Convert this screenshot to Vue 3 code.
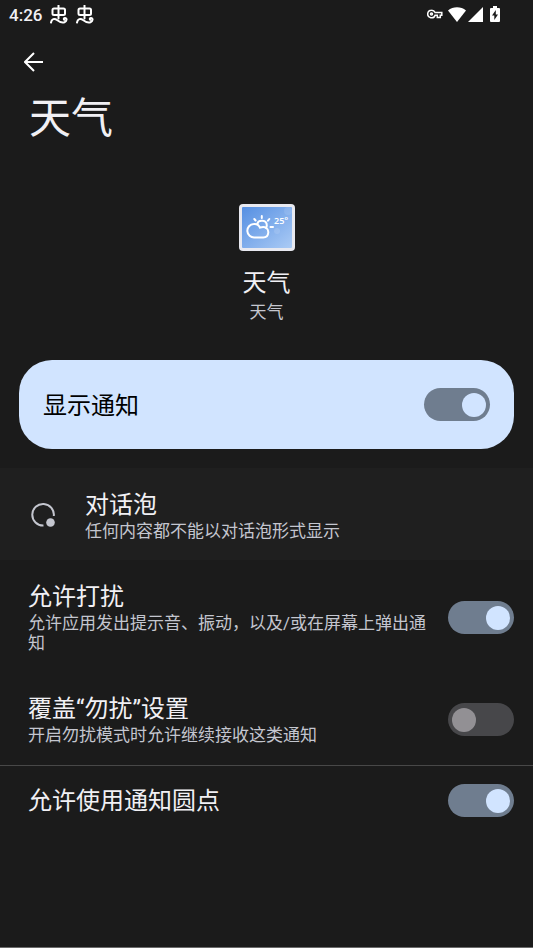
<script setup>
import { ref } from 'vue'

const showNotifications = ref(true)
const allowInterrupt = ref(true)
const overrideDnd = ref(false)
const allowDot = ref(true)
</script>

<template>
  <div class="screen">
    <div class="status-bar">
      <div class="status-left">
        <span class="clock">4:26</span>
        <svg v-for="n in 2" :key="n" class="bug" viewBox="0 0 18 20" aria-hidden="true">
          <path d="M8.500 0.500v13M4 3.500h9.500q1.500 0 1.500 1.500v3.500q0 1.500-1.500 1.500H4q-1.500 0-1.500-1.500V5q0-1.500 1.500-1.500z" />
          <path d="M1 17.500c.5-3.500 3.500-4.500 6-2.500s4.500 3.200 7.500 2.200c2.500-1 2.800-4.200.5-4.200-1.200 0-1.500 1.200-.8 1.800" />
        </svg>
      </div>
      <div class="status-right">
        <svg class="key" viewBox="0 0 16 10" aria-hidden="true">
          <path d="M4.500 1.200a3.800 3.800 0 1 0 3.600 5h2.200v2.300h3v-2.300h1.500v-2.700H8.100a3.800 3.800 0 0 0-3.600-2.300z" />
          <circle cx="4.500" cy="5" r="1" />
        </svg>
        <svg class="wifi" viewBox="0 0 18 15" aria-hidden="true"><path d="M9 15L0 3.500C5-.8 13-.8 18 3.500z" /></svg>
        <svg class="signal" viewBox="0 0 15 15" aria-hidden="true"><path d="M15 0v15H0z" /></svg>
        <svg class="battery" viewBox="0 0 10 16" aria-hidden="true">
          <path d="M3 0h4v2h2q1 0 1 1v12q0 1-1 1H1q-1 0-1-1V3q0-1 1-1h2z" />
          <path class="bolt" d="M5.800 4L2 9.500h2.300V14L8 8.500H5.800z" />
        </svg>
      </div>
    </div>

    <header>
      <button class="back" type="button" aria-label="返回">
        <svg viewBox="0 0 20 20" aria-hidden="true"><path d="M19 10H2M10 1l-9 9 9 9" /></svg>
      </button>
      <h1>天气</h1>
    </header>

    <section class="app">
      <svg class="app-icon" viewBox="0 0 56 47" aria-hidden="true">
        <defs>
          <linearGradient id="sky" x1="0" y1="0" x2="1" y2="1">
            <stop offset="0" stop-color="#558fe2" />
            <stop offset="1" stop-color="#abcbf5" />
          </linearGradient>
        </defs>
        <rect width="56" height="47" rx="4" fill="#e8e9f0" />
        <rect x="3" y="3" width="50" height="41" rx="1" fill="url(#sky)" />
        <circle cx="49" cy="7" r="4" fill="#fff" opacity=".1" />
        <circle cx="38" cy="27" r="3" fill="#fff" opacity=".12" />
        <g class="weather">
          <path d="M15.500 33.500a6.500 6.500 0 0 1-.8-13.500c3-.4 5 .8 6.300 3.700 5-2.200 8.500.8 8.300 4.800-.2 3-2.300 5-5 5z" />
          <path d="M18.300 20c.8-4.500 9.700-4.500 9.500 1.500 0 1-.3 1.800-.8 2.500" />
          <path d="M22.800 12v2M15.300 15l1.300 1.500M30.300 15l-1.300 1.700M31.500 23h2.500" />
        </g>
        <text x="35" y="20" class="temp">25°</text>
      </svg>
      <h2>天气</h2>
      <p>天气</p>
    </section>

    <main>
      <label class="main-switch">
        <span class="title">显示通知</span>
        <input v-model="showNotifications" class="switch" type="checkbox" role="switch">
      </label>

      <button class="bubbles" type="button">
        <svg class="bubble-icon" viewBox="0 0 26 26" aria-hidden="true">
          <path d="M13.500 23.500A10.800 10.800 0 1 1 23.800 14" />
          <circle cx="20.500" cy="20.500" r="4.300" />
        </svg>
        <span class="copy">
          <span class="title">对话泡</span>
          <span class="summary">任何内容都不能以对话泡形式显示</span>
        </span>
      </button>

      <label class="row">
        <span class="copy">
          <span class="title">允许打扰</span>
          <span class="summary">允许应用发出提示音、振动，以及/或在屏幕上弹出通知</span>
        </span>
        <input v-model="allowInterrupt" class="switch" type="checkbox" role="switch">
      </label>

      <label class="row override">
        <span class="copy">
          <span class="title">覆盖“勿扰”设置</span>
          <span class="summary">开启勿扰模式时允许继续接收这类通知</span>
        </span>
        <input v-model="overrideDnd" class="switch" type="checkbox" role="switch">
      </label>

      <label class="row dot">
        <span class="title">允许使用通知圆点</span>
        <input v-model="allowDot" class="switch" type="checkbox" role="switch">
      </label>
    </main>
  </div>
</template>

<style>
body {
  margin: 0;
  background: #1b1b1b;
}
</style>

<style scoped>
.screen {
  box-sizing: border-box;
  min-height: 100vh;
  border-bottom: 1px solid #6b6b6b;
  background: #1b1b1b;
  color: #f1f0f4;
  font-family: Roboto, "Noto Sans CJK SC", sans-serif;
}

h1, h2, p {
  margin: 0;
  font-weight: 400;
}

button {
  border: 0;
  padding: 0;
  background: none;
  color: inherit;
  font: inherit;
  text-align: left;
  cursor: pointer;
}

.status-bar {
  display: flex;
  justify-content: space-between;
  height: 30px;
  padding: 0 33px 0 9px;
}

.status-left, .status-right {
  display: flex;
  align-items: center;
}

.status-left {
  gap: 8px;
}

.clock {
  font-size: 17px;
  font-weight: 500;
}

.bug {
  width: 18px;
  height: 20px;
  fill: none;
  stroke: #fff;
  stroke-width: 2;
  stroke-linecap: round;
}

.status-right {
  padding-bottom: 2px;
  fill: #fff;
}

.key {
  width: 16px;
  height: 10px;
  margin-right: 5px;
  fill: none;
  stroke: #fff;
  stroke-width: 1.5;
}

.wifi {
  width: 18px;
  height: 15px;
  margin-right: 2px;
}

.signal {
  width: 15px;
  height: 15px;
  margin-right: 7px;
}

.battery {
  width: 10px;
  height: 16px;
}

.bolt {
  fill: #1b1b1b;
}

header {
  padding: 22px 28px 0 24px;
}

.back {
  display: block;
  width: 20px;
  height: 20px;
}

.back svg {
  display: block;
  fill: none;
  stroke: #fff;
  stroke-width: 2;
}

h1 {
  margin: 17px 0 0 5px;
  font-size: 42px;
  line-height: 60px;
}

.app {
  display: flex;
  flex-direction: column;
  align-items: center;
  padding-top: 55px;
}

.app-icon {
  width: 56px;
  height: 47px;
}

.weather {
  fill: none;
  stroke: #fff;
  stroke-width: 2;
  stroke-linecap: round;
}

.temp {
  fill: #fff;
  font-family: "Open Sans", sans-serif;
  font-size: 9px;
  font-weight: 600;
}

h2 {
  margin-top: 17px;
  font-size: 24px;
  line-height: 30px;
}

.app p {
  margin-top: 4px;
  color: #c4c6cf;
  font-size: 17px;
  line-height: 20px;
}

.main-switch {
  display: flex;
  align-items: center;
  justify-content: space-between;
  min-height: 89px;
  box-sizing: border-box;
  margin: 38px 19px 19px;
  padding: 0 24px;
  border-radius: 33px;
  background: #d1e4ff;
  color: #000;
}

.title {
  font-size: 24px;
  line-height: 32px;
}

.main-switch > .title,
.dot > .title {
  padding-top: 2px;
}

.summary {
  color: #c4c6cf;
  font-size: 17px;
  line-height: 20px;
}

.copy {
  display: flex;
  flex: 1;
  flex-direction: column;
}

.bubbles {
  display: flex;
  align-items: center;
  width: 100%;
  padding: 21px 19px 19px 30px;
  gap: 29px;
  background: #1f1f1f;
}

.bubble-icon {
  width: 26px;
  height: 26px;
  fill: #c4c6cf;
}

.bubble-icon path {
  fill: none;
  stroke: #c4c6cf;
  stroke-width: 2;
}

.row {
  display: flex;
  align-items: center;
  padding: 21px 19px 19px 28px;
  gap: 20px;
}

.override {
  padding-bottom: 20px;
  border-bottom: 1px solid #484848;
}

.dot {
  justify-content: space-between;
  padding-top: 17px;
}

.switch {
  appearance: none;
  flex: none;
  box-sizing: border-box;
  width: 66px;
  height: 33px;
  margin: 0;
  padding: 5px 4px;
  border-radius: 17px;
  background: #47474a;
  cursor: pointer;
}

.switch::before {
  display: block;
  width: 24px;
  height: 24px;
  border-radius: 50%;
  background: #929094;
  content: "";
}

.switch:checked {
  background: #6f7d8f;
}

.switch:checked::before {
  margin-left: auto;
  background: #d1e4ff;
}
</style>
